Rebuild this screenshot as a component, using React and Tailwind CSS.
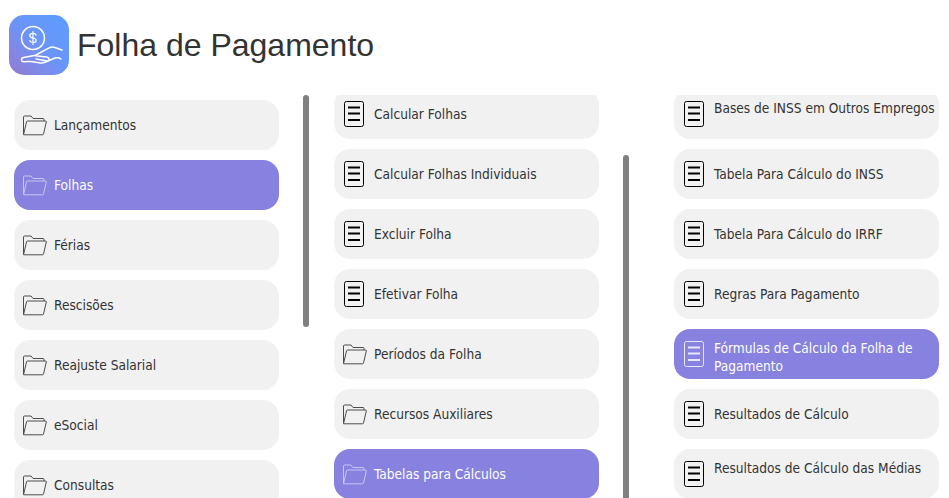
import React from 'react';

const col1 = ['Lançamentos', 'Folhas', 'Férias', 'Rescisões', 'Reajuste Salarial', 'eSocial', 'Consultas'];

const col2 = [
  { label: 'Calcular Folhas', icon: 'file' },
  { label: 'Calcular Folhas Individuais', icon: 'file' },
  { label: 'Excluir Folha', icon: 'file' },
  { label: 'Efetivar Folha', icon: 'file' },
  { label: 'Períodos da Folha', icon: 'folder' },
  { label: 'Recursos Auxiliares', icon: 'folder' },
  { label: 'Tabelas para Cálculos', icon: 'folder', active: true },
];

const col3 = [
  { label: 'Bases de INSS em Outros Empregos', icon: 'file', shift: 'mb-3 whitespace-nowrap' },
  { label: 'Tabela Para Cálculo do INSS', icon: 'file' },
  { label: 'Tabela Para Cálculo do IRRF', icon: 'file' },
  { label: 'Regras Para Pagamento', icon: 'file' },
  { label: 'Fórmulas de Cálculo da Folha de Pagamento', icon: 'file', active: true, shift: 'mt-[6px]' },
  { label: 'Resultados de Cálculo', icon: 'file' },
  { label: 'Resultados de Cálculo das Médias', icon: 'file', shift: 'mb-3 whitespace-nowrap' },
];

function FolderIcon({ active }) {
  return (
    <svg width="24" height="22" viewBox="0 0 24 22" fill="none" className="shrink-0 mr-[7px] -ml-[1px]"
      stroke={active ? '#c9c6f0' : '#4d4d4d'} strokeWidth="1" strokeLinejoin="round">
      <path d="M.5 20V3a1 1 0 0 1 1-1h6.500l2 2.500h10a1 1 0 0 1 1 1V7" />
      <path d="M4.500 7h18a.8.8 0 0 1 .8 1L20.500 20a1 1 0 0 1-1 .8H.5L3.500 8a1 1 0 0 1 1-1z" />
    </svg>
  );
}

function FileIcon({ active }) {
  const c = active ? '#e9e8fa' : '#000000';
  return (
    <svg width="20" height="26" viewBox="0 0 20 26" fill="none" className="shrink-0 mr-[10px]">
      <rect x=".5" y=".5" width="19" height="25" rx="2" stroke={c} />
      <path d="M4 6.500h12M4 12.500h12M4 19h12" stroke={c} strokeWidth="2" />
    </svg>
  );
}

function Item({ label, icon, active, shift }) {
  return (
    <div className={`flex items-center shrink-0 w-[265px] h-[50px] rounded-2xl pl-[10px] text-[13.6px] leading-[18px] ${active ? 'bg-[#8781df] text-white' : 'bg-[#f1f1f1] text-[#333333]'}`}>
      {icon === 'folder' ? <FolderIcon active={active} /> : <FileIcon active={active} />}
      <span className={shift}>{label}</span>
    </div>
  );
}

function Logo() {
  return (
    <div className="w-[60px] h-[60px] rounded-[15px] bg-gradient-to-bl from-[#5c9dff] via-[#6a95f8] to-[#9279d3] shrink-0">
      <svg width="60" height="60" viewBox="0 0 60 60" fill="none" stroke="#ffffff" strokeWidth="1.500" strokeLinecap="round" strokeLinejoin="round">
        <circle cx="24" cy="23" r="11.500" />
        <path d="M28 19.500c-.6-1.500-2-2.200-4-2.200-2.300 0-4 1.100-4 2.800 0 3.900 8 1.900 8 5.700 0 1.700-1.700 2.800-4 2.800-2.100 0-3.500-.8-4.100-2.300M24 15v16" transform="translate(4.800 4.600) scale(.8)" />
        <path d="M53 35l-8-2.700c-1.500-.5-3-.3-4.500.4L27 40" />
        <path d="M52 44c-2-1.500-4-1.500-6-1l-10 4.300c-2 .8-4 .9-6 .5l-8-1.300c-1.500-.2-3.500-.2-7 .2-3 .2-3.500-3.800-.5-4.300l8-1.500c2-.4 4-.4 6 0l9 1c3 .4 3.500 3.600 1 4.200L27 44" />
      </svg>
    </div>
  );
}

export default function App() {
  return (
    <div className="w-[949px] h-[498px] overflow-hidden bg-white font-['DejaVu_Sans_Condensed','DejaVu_Sans',sans-serif]">
      <div className="flex items-center gap-[8px] pl-[9px] pt-[15px] h-[75px]">
        <Logo />
        <h1 className="font-['Liberation_Sans',sans-serif] text-[32px] leading-none text-[#333333]">Folha de Pagamento</h1>
      </div>

      <div className="flex h-[403px] mt-[20px] overflow-hidden">
        {/* Menu */}
        <div className="flex flex-col gap-[10px] ml-[14px] pt-[5px]">
          {col1.map((label, i) => <Item key={label} label={label} icon="folder" active={i === 1} />)}
        </div>
        <div className="w-[6px] h-[232px] ml-[24px] rounded-full bg-[#808080] shrink-0" />

        {/* Folhas */}
        <div className="flex flex-col gap-[10px] ml-[25px] -mt-[6px]">
          {col2.map(item => <Item key={item.label} {...item} />)}
        </div>
        <div className="w-[6px] h-[400px] ml-[24px] mt-[60px] rounded-full bg-[#808080] shrink-0" />

        {/* Tabelas */}
        <div className="flex flex-col gap-[10px] ml-[45px] -mt-[6px]">
          {col3.map(item => <Item key={item.label} {...item} />)}
        </div>
      </div>
    </div>
  );
}
